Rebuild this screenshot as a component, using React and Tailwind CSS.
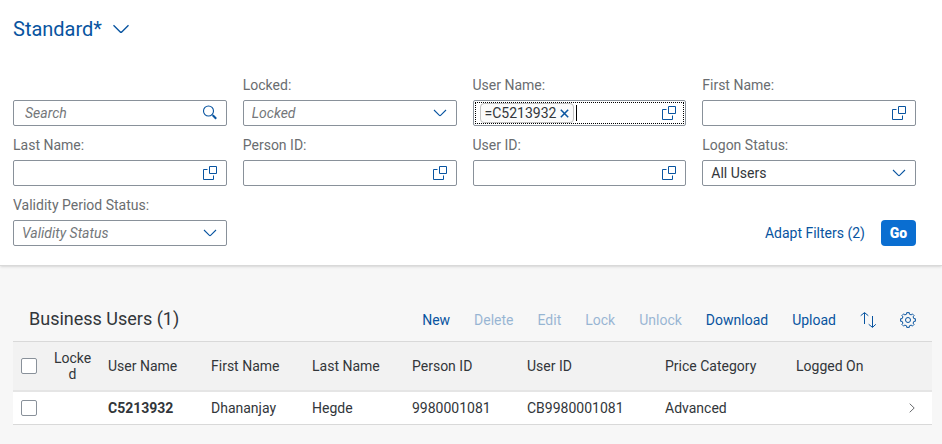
import React from "react";

const FIELD =
  "flex h-[26px] items-center rounded-[2px] border border-[#89919a] bg-white text-[#32363a]";
const INPUT =
  "h-full min-w-0 flex-1 bg-transparent pl-2 outline-none placeholder:italic placeholder:text-[#74777a]";
const ICON_BUTTON = "flex h-full w-8 shrink-0 items-center justify-center text-[#0854a0]";

function Chevron({ className }) {
  return (
    <svg viewBox="0 0 14 8" className={className} fill="none" stroke="currentColor" strokeWidth="1.1" aria-hidden="true">
      <path d="M1 1l5.4 5.3a.9.9 0 0 0 1.2 0L13 1" />
    </svg>
  );
}

function ValueHelpIcon() {
  return (
    <svg viewBox="0 0 14 14" className="size-[14px]" fill="none" stroke="currentColor" aria-hidden="true">
      <path d="M6.5 .5h7v7h-7zM4.5 3.5h-4v10h10v-4" />
    </svg>
  );
}

function SearchIcon() {
  return (
    <svg viewBox="0 0 16 16" className="size-4" fill="none" stroke="currentColor" aria-hidden="true">
      <circle cx="6.5" cy="6" r="5" strokeWidth="1.1" />
      <path d="M10 9.5l1.5 1.5" />
      <path d="M10.8 10.3l3.4 3.4" strokeWidth="2" />
    </svg>
  );
}

function SortIcon() {
  return (
    <svg viewBox="0 0 16 16" className="size-4" fill="none" stroke="currentColor" aria-hidden="true">
      <path d="M4.5 12V.8M.7 3.7L4.5.6l3.8 3.1M12.5 4v11.2M8.7 12.3l3.8 3.1 3.3-3.1" />
    </svg>
  );
}

// Eight square teeth: two points on the inner radius and two on the outer one for each.
const GEAR_POINTS = Array.from({ length: 8 }, (_, tooth) =>
  [
    [6, -13],
    [7.5, -10],
    [7.5, 10],
    [6, 13],
  ].map(([radius, offset]) => {
    const angle = ((tooth * 45 + offset) * Math.PI) / 180;
    return `${(8 + radius * Math.cos(angle)).toFixed(2)},${(8 + radius * Math.sin(angle)).toFixed(2)}`;
  })
)
  .flat()
  .join(" ");

function GearIcon() {
  return (
    <svg viewBox="0 0 16 16" className="size-4" fill="none" stroke="currentColor" strokeLinejoin="round" aria-hidden="true">
      <polygon points={GEAR_POINTS} />
      <circle cx="8" cy="8" r="2.5" />
    </svg>
  );
}

function Label({ htmlFor, children }) {
  return (
    <label htmlFor={htmlFor} className="mb-[6px] block h-[18px] truncate leading-[18px] text-[#6a6d70]">
      {children}
    </label>
  );
}

function ValueHelpField({ id, label }) {
  return (
    <div>
      <Label htmlFor={id}>{label}</Label>
      <div className={FIELD}>
        <input id={id} type="text" className={INPUT} />
        <button type="button" aria-label={`Select ${label}`} className={ICON_BUTTON}>
          <ValueHelpIcon />
        </button>
      </div>
    </div>
  );
}

function ComboField({ id, label, placeholder }) {
  return (
    <div>
      <Label htmlFor={id}>{label}</Label>
      <div className={FIELD}>
        <input id={id} type="text" role="combobox" aria-expanded="false" placeholder={placeholder} className={INPUT} />
        <button type="button" aria-label={`Open ${label}`} className={ICON_BUTTON}>
          <Chevron className="h-2 w-[14px]" />
        </button>
      </div>
    </div>
  );
}

function FilterBar() {
  return (
    <form
      className="grid grid-cols-4 gap-x-4 gap-y-[10px] pr-[26px] pl-[13px]"
      onSubmit={(event) => event.preventDefault()}
    >
      <div className="flex flex-col justify-end">
        <div className={FIELD}>
          <input
            type="text"
            aria-label="Search"
            placeholder="Search"
            className="h-full min-w-0 flex-1 bg-transparent pl-[11px] outline-none placeholder:text-[#74777a] placeholder:italic"
          />
          <button type="button" aria-label="Search" className={ICON_BUTTON}>
            <SearchIcon />
          </button>
        </div>
      </div>
      <ComboField id="locked" label="Locked:" placeholder="Locked" />
      <div>
        <Label htmlFor="user-name">User Name:</Label>
        <div className={`${FIELD} p-px`}>
          <div className="flex h-full min-w-0 flex-1 items-center border border-dotted border-black pl-1">
            <span className="flex h-5 items-center gap-1 rounded-[4px] border border-[#c2c2c2] bg-[#fafafa] px-1">
              =C5213932
              <button type="button" aria-label="Remove =C5213932" className="text-[#0854a0]">
                <svg viewBox="0 0 9 9" className="size-[9px]" fill="none" stroke="currentColor" strokeWidth="1.5" aria-hidden="true">
                  <path d="M.8.8l7.4 7.4M8.2.8L.8 8.2" />
                </svg>
              </button>
            </span>
            <span className="ml-[2px] h-4 w-px shrink-0 bg-black" />
            <input id="user-name" type="text" className="h-full min-w-0 flex-1 bg-transparent outline-none" />
            <button
              type="button"
              aria-label="Select User Name"
              className="flex h-full w-7 shrink-0 items-center justify-center text-[#0854a0]"
            >
              <ValueHelpIcon />
            </button>
          </div>
        </div>
      </div>
      <ValueHelpField id="first-name" label="First Name:" />
      <ValueHelpField id="last-name" label="Last Name:" />
      <ValueHelpField id="person-id" label="Person ID:" />
      <ValueHelpField id="user-id" label="User ID:" />
      <div>
        <Label htmlFor="logon-status">Logon Status:</Label>
        <div className="grid items-center">
          <select
            id="logon-status"
            className="col-start-1 row-start-1 h-[26px] w-full appearance-none rounded-[2px] border border-[#89919a] bg-white pl-2 text-[#32363a] outline-none"
          >
            <option>All Users</option>
          </select>
          <span className="pointer-events-none col-start-1 row-start-1 flex w-[34px] items-center justify-center justify-self-end text-[#0854a0]">
            <Chevron className="h-2 w-[14px]" />
          </span>
        </div>
      </div>
      <ComboField id="validity" label="Validity Period Status:" placeholder="Validity Status" />
      <div className="col-span-3 flex items-end justify-end gap-4">
        <button type="button" className="h-[26px] text-[#0854a0]">
          Adapt Filters (2)
        </button>
        <button type="submit" className="h-[26px] w-[35px] rounded-[4px] bg-[#0a6ed1] font-black text-white">
          Go
        </button>
      </div>
    </form>
  );
}

const ACTIONS = [
  { label: "New", enabled: true },
  { label: "Delete", enabled: false },
  { label: "Edit", enabled: false },
  { label: "Lock", enabled: false },
  { label: "Unlock", enabled: false },
  { label: "Download", enabled: true },
  { label: "Upload", enabled: true },
];

function Toolbar() {
  return (
    <div className="flex h-11 items-center justify-between px-4">
      <h2 className="text-lg text-[#32363a]">Business Users (1)</h2>
      <div className="flex items-center gap-6 pt-[2px] text-[#0854a0]">
        {ACTIONS.map(({ label, enabled }) => (
          <button key={label} type="button" disabled={!enabled} className="disabled:opacity-40">
            {label}
          </button>
        ))}
        <button type="button" aria-label="Sort">
          <SortIcon />
        </button>
        <button type="button" aria-label="Settings">
          <GearIcon />
        </button>
      </div>
    </div>
  );
}

const CHECKBOX = "block size-4 appearance-none rounded-[2px] border border-[#89919a] bg-white";

function UsersTable() {
  return (
    <table className="w-full table-fixed border-collapse text-left text-[#32363a]">
      <colgroup>
        <col className="w-8" />
        <col className="w-[55px]" />
        <col className="w-[103px]" />
        <col className="w-[101px]" />
        <col className="w-[100px]" />
        <col className="w-[115px]" />
        <col className="w-[138px]" />
        <col className="w-[131px]" />
        <col />
        <col className="w-10" />
      </colgroup>
      <thead>
        <tr className="h-[49px] border-t border-b-2 border-t-[#d9d9d9] border-b-[#e5e5e5] bg-[#f2f2f2]">
          <th className="pl-2">
            <input type="checkbox" aria-label="Select all" className={CHECKBOX} />
          </th>
          <th className="px-2 text-center leading-4 font-normal break-all">Locked</th>
          <th className="px-2 font-normal">User Name</th>
          <th className="px-2 font-normal">First Name</th>
          <th className="px-2 font-normal">Last Name</th>
          <th className="px-2 font-normal">Person ID</th>
          <th className="px-2 font-normal">User ID</th>
          <th className="px-2 font-normal">Price Category</th>
          <th className="px-2 font-normal">Logged On</th>
          <th />
        </tr>
      </thead>
      <tbody>
        <tr className="h-[34px] border-b border-[#d9d9d9] bg-white">
          <td className="pl-2">
            <input type="checkbox" aria-label="Select C5213932" className={CHECKBOX} />
          </td>
          <td />
          <td className="px-2 font-bold">C5213932</td>
          <td className="px-2">Dhananjay</td>
          <td className="px-2">Hegde</td>
          <td className="px-2">9980001081</td>
          <td className="px-2">CB9980001081</td>
          <td className="px-2">Advanced</td>
          <td />
          <td>
            <svg viewBox="0 0 6 10" className="mx-auto h-[10px] w-[6px]" fill="none" stroke="#6a6d70" aria-hidden="true">
              <path d="M.7.7L5.2 5 .7 9.3" />
            </svg>
          </td>
        </tr>
      </tbody>
    </table>
  );
}

export default function App() {
  return (
    <div className="min-h-screen bg-[#f7f7f7] font-['Roboto','Liberation_Sans',sans-serif] text-sm">
      <header className="border-b border-[#d9d9d9] bg-white pt-[15px] pb-[19px] shadow-sm">
        <button type="button" className="mb-[33px] ml-[13px] flex h-7 items-center gap-[10px] text-xl text-[#0854a0]">
          Standard*
          <Chevron className="h-[10px] w-[18px]" />
        </button>
        <FilterBar />
      </header>
      <main className="pt-[31px] pr-[10px] pl-[13px]">
        <Toolbar />
        <UsersTable />
      </main>
    </div>
  );
}
